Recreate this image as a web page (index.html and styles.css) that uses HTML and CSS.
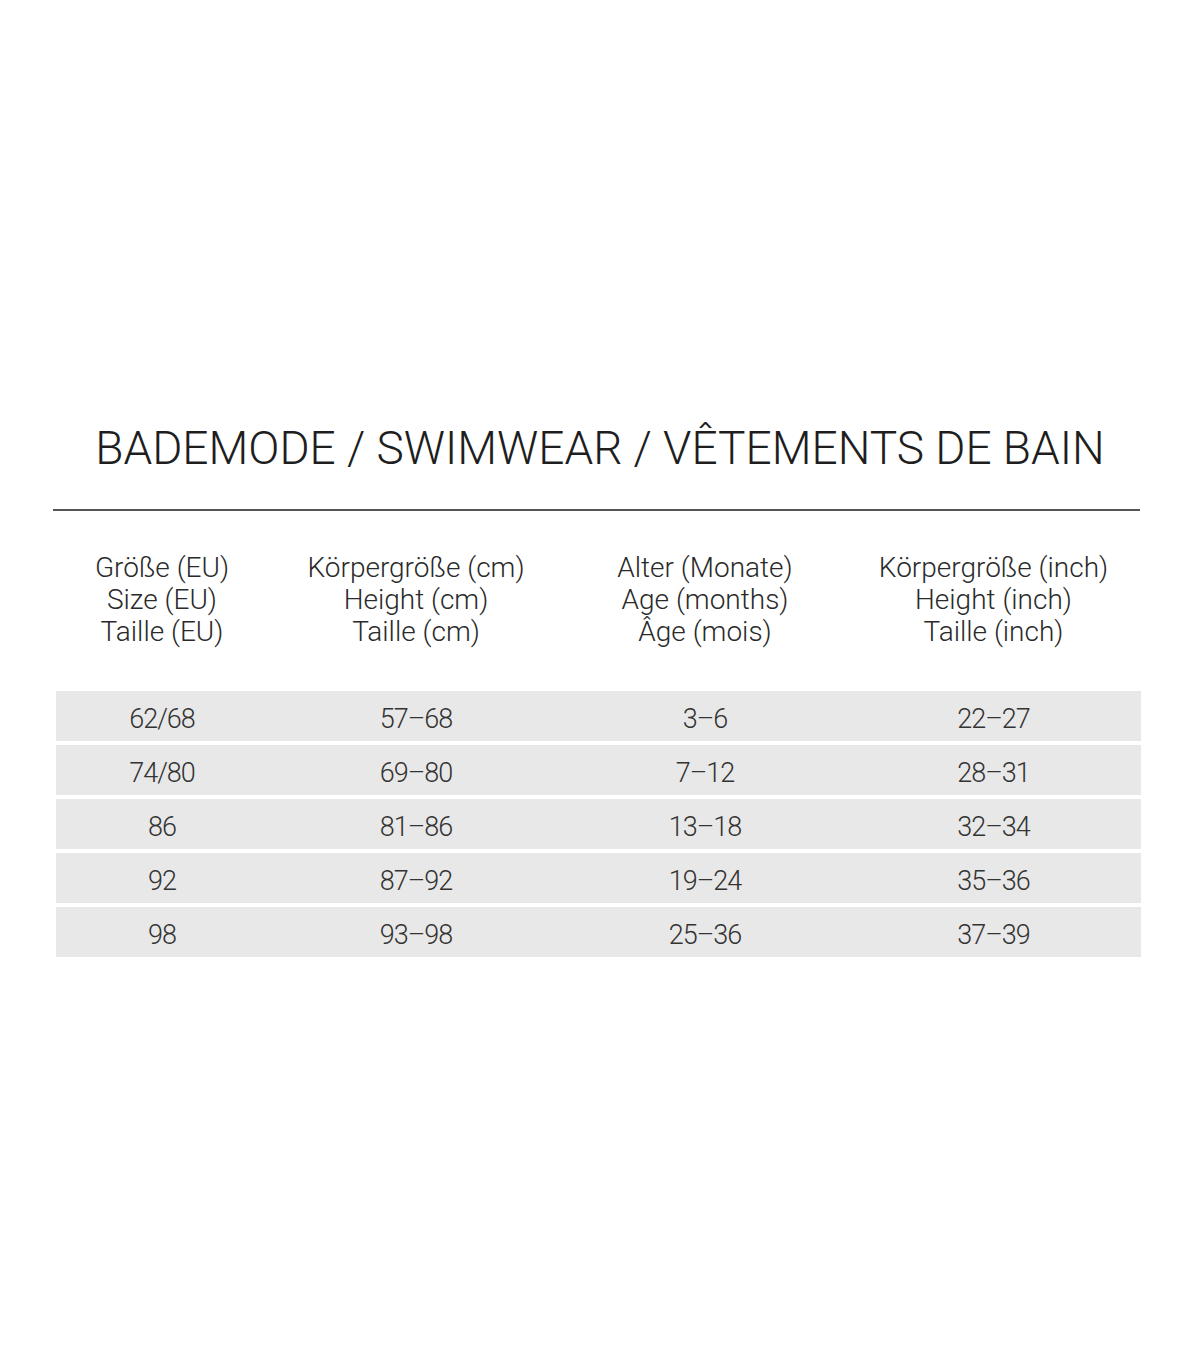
FILE: index.html
```html
<!DOCTYPE html>
<html lang="de">
<head>
<meta charset="utf-8">
<title>Bademode Größentabelle</title>
<link rel="stylesheet" href="styles.css">
</head>
<body>
<main class="page">
  <h1 class="title">BADEMODE / SWIMWEAR / VÊTEMENTS DE BAIN</h1>
  <hr class="rule">
  <div class="table">
    <div class="head">
      <div class="cell">Größe (EU)<br>Size (EU)<br>Taille (EU)</div>
      <div class="cell">Körpergröße (cm)<br>Height (cm)<br>Taille (cm)</div>
      <div class="cell">Alter (Monate)<br>Age (months)<br>Âge (mois)</div>
      <div class="cell">Körpergröße (inch)<br>Height (inch)<br>Taille (inch)</div>
    </div>
    <div class="row"><div class="cell">62/68</div><div class="cell">57–68</div><div class="cell">3–6</div><div class="cell">22–27</div></div>
    <div class="row"><div class="cell">74/80</div><div class="cell">69–80</div><div class="cell">7–12</div><div class="cell">28–31</div></div>
    <div class="row"><div class="cell">86</div><div class="cell">81–86</div><div class="cell">13–18</div><div class="cell">32–34</div></div>
    <div class="row"><div class="cell">92</div><div class="cell">87–92</div><div class="cell">19–24</div><div class="cell">35–36</div></div>
    <div class="row"><div class="cell">98</div><div class="cell">93–98</div><div class="cell">25–36</div><div class="cell">37–39</div></div>
  </div>
</main>
</body>
</html>
```
FILE: styles.css
```css
html, body {
  margin: 0;
  padding: 0;
  background: #ffffff;
}
.page {
  width: 1200px;
  height: 1372px;
  box-sizing: border-box;
  padding-top: 418px;
  font-family: Roboto, "Liberation Sans", sans-serif;
  font-weight: 300;
  color: #2a2a2a;
}
.title {
  margin: 0;
  text-align: center;
  font-size: 46px;
  font-weight: 300;
  line-height: 60px;
  letter-spacing: 0;
  color: #1e1e1e;
}
.rule {
  margin: 31px 0 0 53px;
  width: 1087px;
  height: 2px;
  border: 0;
  background: #555555;
}
.table {
  margin: 41px 0 0 56px;
  width: 1085px;
  display: flex;
  flex-direction: column;
  gap: 4px;
}
.head, .row {
  display: grid;
  grid-template-columns: 212px 296px 282px 295px;
  text-align: center;
}
.head {
  font-size: 28px;
  line-height: 32px;
  color: #2a2a2a;
  margin-bottom: 39px;
}
.row {
  height: 50px;
  box-sizing: border-box;
  padding-top: 6px;
  align-items: center;
  background: #e8e8e8;
  font-size: 27px;
  letter-spacing: -1px;
  color: #333333;
}
```
